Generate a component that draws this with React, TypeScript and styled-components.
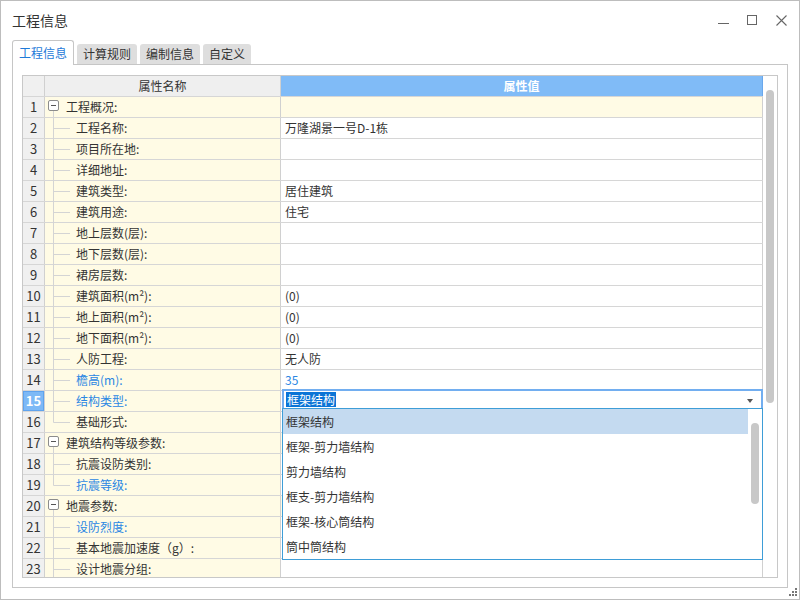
import React from 'react';
import styled, { createGlobalStyle, css } from 'styled-components';

const GlobalStyle = createGlobalStyle`
  html, body {
    margin: 0;
    padding: 0;
    background: #ffffff;
  }
  body {
    font-family: "Noto Sans CJK SC", "Noto Sans", sans-serif;
    font-size: 12px;
    color: #333333;
  }
  * {
    box-sizing: border-box;
  }
`;

const Window = styled.div`
  position: relative;
  width: 800px;
  height: 600px;
  border: 1px solid #bdbdbd;
  background: #ffffff;
  display: flex;
  flex-direction: column;
  padding: 0 11px 11px 11px;
`;

const TitleBar = styled.div`
  height: 39px;
  display: flex;
  align-items: center;
  justify-content: space-between;
`;

const Title = styled.div`
  font-size: 14px;
  line-height: 18px;
  color: #333333;
  margin-top: -1px;
`;

const Controls = styled.div`
  display: flex;
  align-items: center;
  gap: 18px;
  margin-right: 1px;
  margin-top: 0px;
`;

const ControlIcon = styled.svg`
  display: block;
  width: 11px;
  height: 11px;
`;

const TabStrip = styled.div`
  height: 24px;
  display: flex;
  align-items: flex-end;
  gap: 3px;
  position: relative;
  z-index: 1;
`;

const Tab = styled.div<{ $active?: boolean; $w: number }>`
  width: ${({ $w }) => $w}px;
  text-align: center;
  font-size: 12px;
  border-radius: 3px 3px 0 0;
  ${({ $active }) =>
    $active
      ? css`
          height: 25px;
          line-height: 23px;
          margin-bottom: -1px;
          background: #ffffff;
          border: 1px solid #c6c6c6;
          border-bottom: none;
          color: #1f7ad8;
        `
      : css`
          height: 20px;
          line-height: 20px;
          background: #dedede;
          color: #333333;
        `}
`;

const Panel = styled.div`
  flex: 1;
  border: 1px solid #c6c6c6;
  padding: 10px 9px 9px 9px;
  display: flex;
  min-height: 0;
`;

const Grid = styled.div`
  flex: 1;
  position: relative;
  border: 1px solid #c8c8c8;
  display: flex;
  overflow: hidden;
`;

const Table = styled.div`
  width: 740px;
  display: flex;
  flex-direction: column;
`;

const Row = styled.div`
  display: flex;
  height: 21px;
  flex-shrink: 0;
  border-bottom: 1px solid #d6d6d6;
`;

const NumCell = styled.div<{ $selected?: boolean; $head?: boolean }>`
  width: 22px;
  border-right: 1px solid #d0d0d0;
  background: #f0f0f0;
  text-align: center;
  font-size: 13px;
  line-height: 20px;
  color: #333333;
  ${({ $selected }) =>
    $selected &&
    css`
      background: #7db9f6;
      color: #ffffff;
      font-weight: bold;
      box-shadow: inset 0 0 0 1px #5fa3ee;
    `}
`;

const NameCell = styled.div<{ $accent?: boolean }>`
  width: 236px;
  border-right: 1px solid #d0d0d0;
  background: #fffbe5;
  display: flex;
  align-items: stretch;
  line-height: 20px;
  white-space: nowrap;
  color: ${({ $accent }) => ($accent ? '#2b87e3' : '#333333')};
`;

const ValueCell = styled.div<{ $group?: boolean; $accent?: boolean }>`
  width: 482px;
  border-right: 1px solid #d0d0d0;
  background: ${({ $group }) => ($group ? '#fffbe5' : '#ffffff')};
  padding-left: 4px;
  line-height: 20px;
  white-space: nowrap;
  color: ${({ $accent }) => ($accent ? '#2b87e3' : '#333333')};
`;

const HeadName = styled.div`
  width: 236px;
  border-right: 1px solid #d0d0d0;
  background: #efefef;
  text-align: center;
  line-height: 20px;
  color: #333333;
`;

const HeadValue = styled.div`
  width: 482px;
  background: #80bbf7;
  border-right: 1px solid #6aa8ec;
  text-align: center;
  line-height: 20px;
  color: #ffffff;
  font-weight: bold;
`;

const Guide = styled.svg`
  flex-shrink: 0;
  display: block;
`;

const ScrollTrack = styled.div`
  width: 14px;
  padding: 14px 0 0 3px;
`;

const Thumb = styled.div<{ $h: number }>`
  width: 8px;
  height: ${({ $h }) => $h}px;
  border-radius: 4px;
  background: #c8c8c8;
`;

const Combo = styled.div`
  position: absolute;
  left: 259px;
  top: 313px;
  width: 481px;
  display: flex;
  flex-direction: column;
`;

const Editor = styled.div`
  height: 19px;
  border: 2px solid #72aef0;
  border-bottom: none;
  background: #ffffff;
  display: flex;
  align-items: center;
  justify-content: space-between;
  padding: 0 8px 0 2px;
`;

const Picked = styled.span`
  background: #0a74d6;
  color: #ffffff;
  line-height: 15px;
  padding: 0 1px;
`;

const Caret = styled.span`
  width: 0;
  height: 0;
  border-left: 3px solid transparent;
  border-right: 3px solid transparent;
  border-top: 4px solid #555555;
  margin-top: 2px;
`;

const List = styled.div`
  height: 152px;
  border: 1px solid #3e9dd7;
  background: #ffffff;
  display: flex;
`;

const Options = styled.div`
  width: 465px;
  display: flex;
  flex-direction: column;
`;

const Option = styled.div<{ $selected?: boolean }>`
  height: 25px;
  line-height: 25px;
  padding-left: 3px;
  color: #333333;
  background: ${({ $selected }) => ($selected ? '#c4daf0' : 'transparent')};
`;

const ListTrack = styled.div`
  flex: 1;
  padding: 14px 0 0 3px;
`;

const Grip = styled.svg`
  position: absolute;
  right: 1px;
  bottom: 2px;
`;

interface RowData {
  name: string;
  value?: string;
  group?: boolean;
  hasChildren?: boolean;
  last?: boolean;
  accent?: boolean;
}

const rows: RowData[] = [
  { name: '工程概况:', group: true, hasChildren: true },
  { name: '工程名称:', value: '万隆湖景一号D-1栋' },
  { name: '项目所在地:' },
  { name: '详细地址:' },
  { name: '建筑类型:', value: '居住建筑' },
  { name: '建筑用途:', value: '住宅' },
  { name: '地上层数(层):' },
  { name: '地下层数(层):' },
  { name: '裙房层数:' },
  { name: '建筑面积(m²):', value: '(0)' },
  { name: '地上面积(m²):', value: '(0)' },
  { name: '地下面积(m²):', value: '(0)' },
  { name: '人防工程:', value: '无人防' },
  { name: '檐高(m):', value: '35', accent: true },
  { name: '结构类型:', accent: true },
  { name: '基础形式:', last: true },
  { name: '建筑结构等级参数:', group: true, hasChildren: true },
  { name: '抗震设防类别:' },
  { name: '抗震等级:', accent: true, last: true },
  { name: '地震参数:', group: true, hasChildren: true },
  { name: '设防烈度:', accent: true },
  { name: '基本地震加速度（g）:' },
  { name: '设计地震分组:' },
];

const options = ['框架结构', '框架-剪力墙结构', '剪力墙结构', '框支-剪力墙结构', '框架-核心筒结构', '筒中筒结构'];

const SELECTED_ROW = 15;

const TreeGuide = ({ row }: { row: RowData }) => {
  if (row.group) {
    return (
      <Guide width={21} height={20} viewBox="0 0 21 20">
        <rect x={3.5} y={3.5} width={10} height={10} rx={1.5} fill="#ffffff" stroke="#8c8c8c" />
        <line x1={6} y1={8.5} x2={11} y2={8.5} stroke="#555555" />
        {row.hasChildren && <line x1={8.5} y1={14} x2={8.5} y2={21} stroke="#d4d4d4" />}
      </Guide>
    );
  }
  return (
    <Guide width={31} height={21} viewBox="0 0 31 21">
      <line x1={8.5} y1={0} x2={8.5} y2={row.last ? 10.5 : 21} stroke="#d4d4d4" />
      <line x1={8.5} y1={10.5} x2={25} y2={10.5} stroke="#d4d4d4" />
    </Guide>
  );
};

const PropertyRow = ({ row, no }: { row: RowData; no: number }) => (
  <Row>
    <NumCell $selected={no === SELECTED_ROW}>{no}</NumCell>
    <NameCell $accent={row.accent}>
      <TreeGuide row={row} />
      <span>{row.name}</span>
    </NameCell>
    <ValueCell $group={row.group} $accent={row.accent}>
      {row.value}
    </ValueCell>
  </Row>
);

export default function App() {
  return (
    <>
      <GlobalStyle />
      <Window>
        <TitleBar>
          <Title>工程信息</Title>
          <Controls>
            <ControlIcon viewBox="0 0 11 11">
              <line x1={0} y1={8.5} x2={11} y2={8.5} stroke="#666666" />
            </ControlIcon>
            <ControlIcon viewBox="0 0 11 11">
              <rect x={0.5} y={0.5} width={9} height={9} fill="none" stroke="#666666" />
            </ControlIcon>
            <ControlIcon viewBox="0 0 11 11">
              <path d="M0.5 0.5 L10.5 10.5 M10.5 0.5 L0.5 10.5" stroke="#666666" strokeWidth={1.1} />
            </ControlIcon>
          </Controls>
        </TitleBar>

        <TabStrip>
          <Tab $active $w={62}>工程信息</Tab>
          <Tab $w={60}>计算规则</Tab>
          <Tab $w={60}>编制信息</Tab>
          <Tab $w={48}>自定义</Tab>
        </TabStrip>

        <Panel>
          <Grid>
            <Table>
              <Row>
                <NumCell $head />
                <HeadName>属性名称</HeadName>
                <HeadValue>属性值</HeadValue>
              </Row>
              {rows.map((row, i) => (
                <PropertyRow key={i} row={row} no={i + 1} />
              ))}
            </Table>
            <ScrollTrack>
              <Thumb $h={313} />
            </ScrollTrack>

            <Combo>
              <Editor>
                <Picked>框架结构</Picked>
                <Caret />
              </Editor>
              <List>
                <Options>
                  {options.map((o, i) => (
                    <Option key={o} $selected={i === 0}>
                      {o}
                    </Option>
                  ))}
                </Options>
                <ListTrack>
                  <Thumb $h={81} />
                </ListTrack>
              </List>
            </Combo>
          </Grid>
        </Panel>

        <Grip width={9} height={9} viewBox="0 0 9 9">
          <rect x={6} y={0} width={2} height={2} fill="#777777" />
          <rect x={3} y={3} width={2} height={2} fill="#777777" />
          <rect x={6} y={3} width={2} height={2} fill="#777777" />
          <rect x={0} y={6} width={2} height={2} fill="#777777" />
          <rect x={3} y={6} width={2} height={2} fill="#777777" />
          <rect x={6} y={6} width={2} height={2} fill="#777777" />
        </Grip>
      </Window>
    </>
  );
}
